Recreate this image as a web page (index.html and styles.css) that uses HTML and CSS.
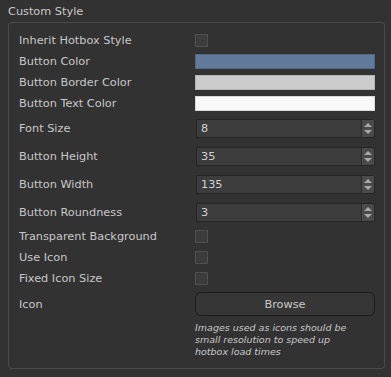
FILE: index.html
```html
<!DOCTYPE html>
<html lang="en">
<head>
    <meta charset="UTF-8">
    <title>Custom Style</title>
    <link rel="stylesheet" href="styles.css">
</head>
<body>
    <div class="panel">
        <div class="title">Custom Style</div>
        <div class="group">
            <div class="row short">
                <span class="label">Inherit Hotbox Style</span>
                <span class="checkbox"></span>
            </div>
            <div class="row short">
                <span class="label">Button Color</span>
                <span class="swatch blue"></span>
            </div>
            <div class="row short">
                <span class="label">Button Border Color</span>
                <span class="swatch grey"></span>
            </div>
            <div class="row short">
                <span class="label">Button Text Color</span>
                <span class="swatch white"></span>
            </div>
            <div class="row tall">
                <span class="label">Font Size</span>
                <div class="spinbox"><span class="value">8</span><span class="arrows"></span></div>
            </div>
            <div class="row tall">
                <span class="label">Button Height</span>
                <div class="spinbox"><span class="value">35</span><span class="arrows"></span></div>
            </div>
            <div class="row tall">
                <span class="label">Button Width</span>
                <div class="spinbox"><span class="value">135</span><span class="arrows"></span></div>
            </div>
            <div class="row tall">
                <span class="label">Button Roundness</span>
                <div class="spinbox"><span class="value">3</span><span class="arrows"></span></div>
            </div>
            <div class="row short">
                <span class="label">Transparent Background</span>
                <span class="checkbox"></span>
            </div>
            <div class="row short">
                <span class="label">Use Icon</span>
                <span class="checkbox"></span>
            </div>
            <div class="row short">
                <span class="label">Fixed Icon Size</span>
                <span class="checkbox"></span>
            </div>
            <div class="row icon-row">
                <span class="label">Icon</span>
                <button class="browse">Browse</button>
            </div>
            <div class="hint">Images used as icons should be small resolution to speed up hotbox load times</div>
        </div>
    </div>
</body>
</html>
```

FILE: styles.css
```css
:root {
    --bg: #323232;
    --text: #c8c8c8;
    --group-border: #4a4a4a;
    --field: #3c3c3c;
    --field-border: #262626;
}

body {
    margin: 0;
    background-color: var(--bg);
    color: var(--text);
    font-family: "DejaVu Sans", Verdana, sans-serif;
    font-size: 11.3px;
}

.panel {
    padding: 0 6px 0 8px;
}

.title {
    line-height: 14px;
    padding-top: 5px;
    margin-bottom: 3px;
}

.group {
    border: 1px solid var(--group-border);
    border-radius: 3px;
    padding: 7px 9px 10px 10px;
}

.row {
    display: flex;
    align-items: center;
}

.row.short {
    height: 21px;
}

.row.tall {
    height: 28px;
}

.label {
    width: 176px;
    flex-shrink: 0;
}

.checkbox {
    width: 11px;
    height: 11px;
    background-color: #3c3c3c;
    border: 1px solid #4f4f4f;
}

.swatch {
    width: 178px;
    height: 13px;
    border: 1px solid;
}

.swatch.blue {
    background-color: #637b9a;
    border-color: #51667f;
}

.swatch.grey {
    background-color: #cbcbcb;
    border-color: #b3b3b3;
}

.swatch.white {
    background-color: #f8f8f8;
    border-color: #d8d8d8;
}

.spinbox {
    display: flex;
    width: 178px;
    height: 17px;
    background-color: var(--field);
    border: 1px solid var(--field-border);
    border-radius: 2px;
    margin-left: 1px;
}

.spinbox .value {
    flex: 1;
    padding-left: 4px;
    line-height: 17px;
    color: #d2d2d2;
}

.spinbox .arrows {
    position: relative;
    width: 12px;
    background-color: #4a4a4a;
    border-left: 1px solid #2c2c2c;
    border-radius: 0 2px 2px 0;
}

.spinbox .arrows::before,
.spinbox .arrows::after {
    content: "";
    position: absolute;
    left: 2px;
    border-left: 4px solid transparent;
    border-right: 4px solid transparent;
}

.spinbox .arrows::before {
    top: 3px;
    border-bottom: 4px solid #a8a8a8;
}

.spinbox .arrows::after {
    bottom: 3px;
    border-top: 4px solid #a8a8a8;
}

.icon-row {
    height: 24px;
    margin-top: 3px;
}

.browse {
    width: 180px;
    height: 24px;
    background-color: #363636;
    border: 1px solid #1c1c1c;
    border-radius: 6px;
    color: var(--text);
    font-family: inherit;
    font-size: 11.3px;
    padding: 0;
}

.hint {
    margin: 6px 0 0 176px;
    width: 158px;
    font-size: 9.5px;
    font-style: italic;
    line-height: 12px;
}
```
